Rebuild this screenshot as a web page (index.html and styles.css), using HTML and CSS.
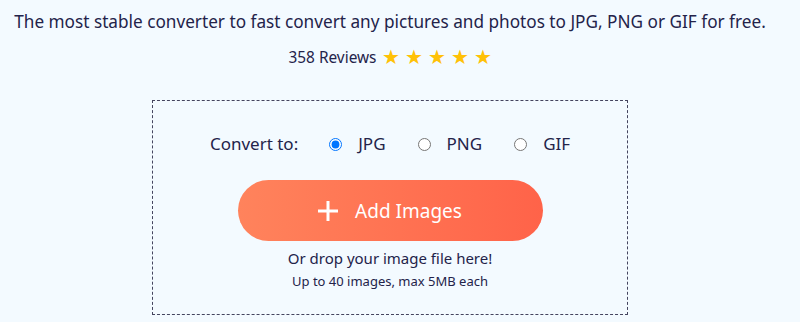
FILE: index.html
```html
<!DOCTYPE html>
<html lang="en">
<head>
    <meta charset="UTF-8">
    <meta name="viewport" content="width=device-width, initial-scale=1.0">
    <title>Image Converter</title>
    <link rel="stylesheet" href="styles.css">
</head>
<body>
    <div class="page">
        <p class="tagline">The most stable converter to fast convert any pictures and photos to JPG, PNG or GIF for free.</p>

        <div class="rating">
            <span class="reviews">358 Reviews</span>
            <span class="stars">
                <span>★</span><span>★</span><span>★</span><span>★</span><span>★</span>
            </span>
        </div>

        <div class="dropzone">
            <div class="formats">
                <span class="formats-label">Convert to:</span>
                <label class="format"><input type="radio" name="format" checked> JPG</label>
                <label class="format"><input type="radio" name="format"> PNG</label>
                <label class="format"><input type="radio" name="format"> GIF</label>
            </div>

            <button class="add-btn">
                <svg class="plus" width="20" height="20" viewBox="0 0 20 20">
                    <path d="M10 0v20M0 10h20" stroke="#fff" stroke-width="3" fill="none"/>
                </svg>
                Add Images
            </button>

            <p class="drop-hint">Or drop your image file here!</p>
            <p class="limit">Up to 40 images, max 5MB each</p>
        </div>
    </div>
</body>
</html>
```

FILE: styles.css
```css
* {
    box-sizing: border-box;
}

body {
    margin: 0;
    background-color: #f3faff;
    color: #23234a;
    font-family: "Noto Sans", "Open Sans", sans-serif;
}

.page {
    width: 780px;
    text-align: center;
}

.tagline {
    margin: 0;
    padding-top: 8px;
    font-size: 17.2px;
    line-height: 28px;
    white-space: nowrap;
}

.rating {
    margin-top: 9px;
    display: flex;
    justify-content: center;
    align-items: center;
    gap: 5px;
}

.reviews {
    font-size: 15.4px;
}

.stars {
    display: flex;
    gap: 5px;
    color: #ffc107;
    font-size: 20px;
    line-height: 24px;
}

.dropzone {
    width: 476px;
    height: 215px;
    margin: 31px auto 0;
    border: 1px dashed #44445e;
    padding-top: 31px;
}

.formats {
    display: flex;
    justify-content: center;
    align-items: center;
    font-size: 17px;
    line-height: 24px;
}

.formats-label {
    margin-right: 31px;
}

.format {
    display: flex;
    align-items: center;
    gap: 16px;
    margin-right: 32px;
}

.format:last-child {
    margin-right: 0;
}

.format input {
    margin: 0;
    width: 13px;
    height: 13px;
}

.add-btn {
    margin-top: 24px;
    width: 305px;
    height: 61px;
    border: none;
    border-radius: 31px;
    background: linear-gradient(90deg, #ff835c, #ff6349);
    color: #fff;
    font-family: inherit;
    font-size: 19px;
    display: inline-flex;
    justify-content: center;
    align-items: center;
    gap: 17px;
    cursor: pointer;
}

.drop-hint {
    margin: 6px 0 0;
    font-size: 15px;
    line-height: 22px;
}

.limit {
    margin: 1px 0 0;
    font-size: 13px;
    line-height: 22px;
}
```
